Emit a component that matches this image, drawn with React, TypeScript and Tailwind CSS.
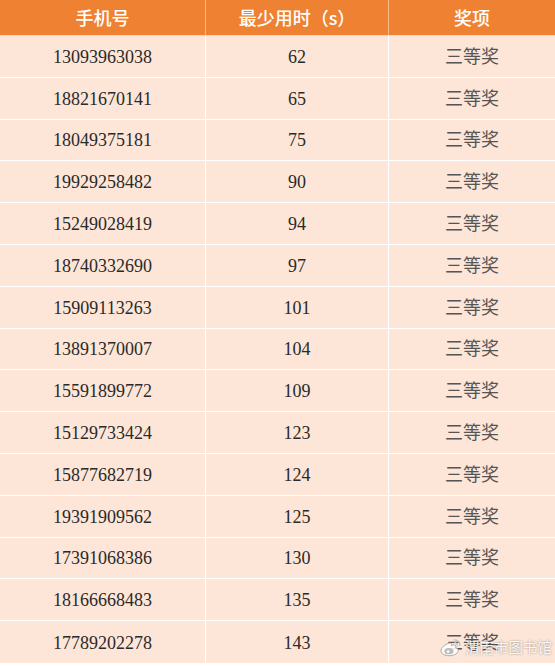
const rows: [string, number][] = [
  ['13093963038', 62],
  ['18821670141', 65],
  ['18049375181', 75],
  ['19929258482', 90],
  ['15249028419', 94],
  ['18740332690', 97],
  ['15909113263', 101],
  ['13891370007', 104],
  ['15591899772', 109],
  ['15129733424', 123],
  ['15877682719', 124],
  ['19391909562', 125],
  ['17391068386', 130],
  ['18166668483', 135],
  ['17789202278', 143],
];

const cjkSans = { fontFamily: '"Noto Sans CJK SC", "Noto Sans", sans-serif' };
const serif = { fontFamily: '"Liberation Serif", "Noto Sans CJK SC", serif' };

function WeiboLogo() {
  return (
    <svg width="24" height="20" viewBox="0 0 28 24" aria-hidden="true">
      <g fill="rgba(255,255,255,0.9)" stroke="#9a9a9a" strokeWidth="1">
        <path d="M11.5 7.5c-5 1.2-9.5 5.6-9.5 9.2 0 3.6 4.6 5.8 10 5.8 6.3 0 10.8-3.3 10.8-6.3 0-2.2-2-2.9-3.3-3.2.6-1.4.8-3.2-1.3-3.5-1.4-.2-3.1.6-3.6.8.6-1.6.5-3.9-3.1-2.8z" />
        <ellipse cx="11.5" cy="17" rx="5.5" ry="3.8" fill="#bdbdbd" stroke="none" />
        <circle cx="10.5" cy="17.5" r="1.6" fill="#fff" stroke="none" />
      </g>
      <path d="M18 3.5a6 6 0 0 1 6.5 6.5" fill="none" stroke="#bdbdbd" strokeWidth="1.6" strokeLinecap="round" />
      <path d="M18.5 6.8a2.8 2.8 0 0 1 3 3" fill="none" stroke="#bdbdbd" strokeWidth="1.4" strokeLinecap="round" />
    </svg>
  );
}

export default function App() {
  return (
    <div className="relative w-[555px] h-[666px] bg-white overflow-hidden">
      <div className="grid grid-cols-[205px_1px_182px_1px_1fr] h-[35px] bg-[#ee8232]">
        <div className="flex items-center justify-center text-white text-[18px] font-medium" style={cjkSans}>
          手机号
        </div>
        <div className="bg-[#f7b98a]" />
        <div className="flex items-center justify-center text-white text-[18px] font-medium" style={cjkSans}>
          最少用时（s）
        </div>
        <div className="bg-[#f7b98a]" />
        <div className="flex items-center justify-center text-white text-[18px] font-medium" style={cjkSans}>
          奖项
        </div>
      </div>
      <div className="h-px bg-[#f9d9c2]" />
      {rows.map(([phone, time], i) => (
        <div
          key={phone}
          className={`grid grid-cols-[205px_1px_182px_1px_1fr] h-[41.8px] bg-[#fde6d7] ${
            i < rows.length - 1 ? 'border-b border-white' : ''
          }`}
        >
          <div className="flex items-center justify-center pt-[2px] text-[18px] text-[#2a2a2a]" style={serif}>
            {phone}
          </div>
          <div className="bg-white" />
          <div className="flex items-center justify-center pt-[2px] text-[18px] text-[#2a2a2a]" style={serif}>
            {time}
          </div>
          <div className="bg-white" />
          <div className="flex items-center justify-center pt-[2px] text-[18px] text-[#555]" style={serif}>
            三等奖
          </div>
        </div>
      ))}

      {/* watermark */}
      <div className="absolute left-[439px] top-[637px] flex items-center gap-[2px]">
        <WeiboLogo />
        <span
          className="text-[14.5px] leading-[20px] text-white/90"
          style={{ ...cjkSans, textShadow: '0 0 2px rgba(0,0,0,0.45)' }}
        >
          渭南市图书馆
        </span>
      </div>
    </div>
  );
}
